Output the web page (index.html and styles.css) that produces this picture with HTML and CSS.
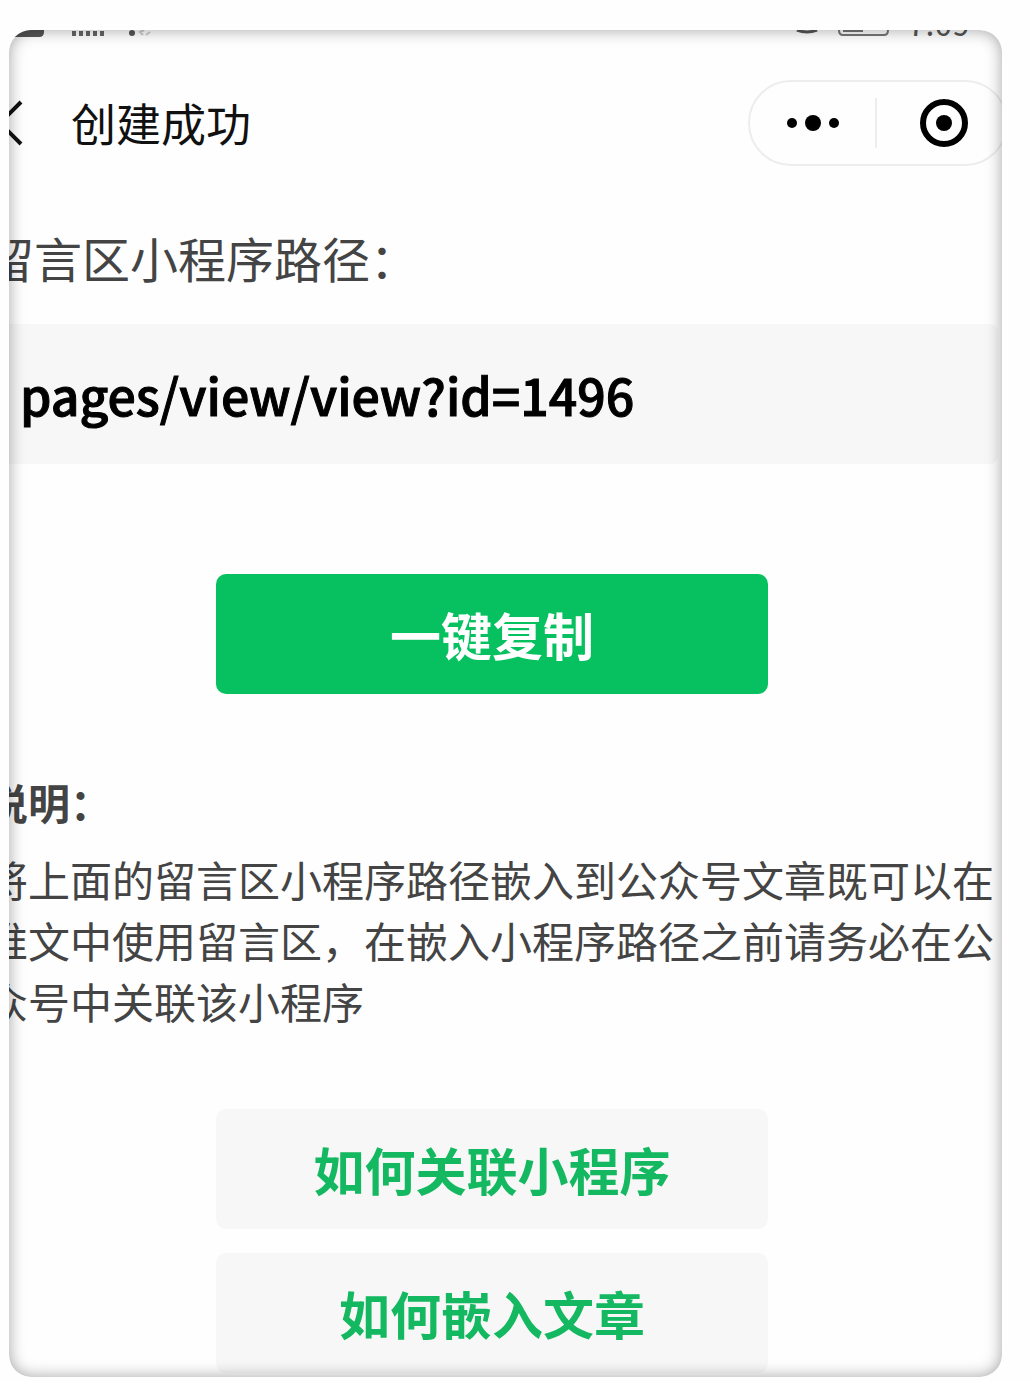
FILE: index.html
```html
<!DOCTYPE html>
<html lang="zh-CN">
<head>
<meta charset="utf-8">
<meta name="viewport" content="width=device-width, initial-scale=1">
<title>创建成功</title>
<link rel="stylesheet" href="styles.css">
</head>
<body>
<main class="card">
  <div class="status">
    <svg class="status-left" width="160" height="8" viewBox="0 0 160 8" aria-hidden="true">
      <path d="M0 0H35V2Q35 7 30 7H0Z" fill="#555"/>
      <path d="M65 1V6M72 1V6M79 1V6M86 1V6M93 1V6" stroke="#666" stroke-width="4"/>
      <circle cx="123" cy="3" r="3" fill="#555"/>
      <path d="M135 0l-4 2 3 3M137 5l4-3" stroke="#ccc" stroke-width="2" fill="none"/>
    </svg>
    <svg class="status-right" width="100" height="8" viewBox="0 0 100 8" aria-hidden="true">
      <path d="M3 0Q13 4 23 0" stroke="#555" stroke-width="3" fill="none"/>
      <path d="M45 0Q45 5 49 5H90Q94 5 94 0M49 1H69" stroke="#777" stroke-width="2" fill="none"/>
    </svg>
    <span class="time">7:09</span>
  </div>

  <header class="nav">
    <button class="back" type="button" aria-label="返回">
      <svg width="28" height="48" viewBox="0 0 28 48"><path d="M26 3L5 24L26 45" fill="none" stroke="#111" stroke-width="4"/></svg>
    </button>
    <h1 class="title">创建成功</h1>
    <div class="capsule">
      <button class="capsule-btn" type="button" aria-label="更多">
        <svg width="52" height="20" viewBox="0 0 52 20"><circle cx="5" cy="10" r="5"/><circle cx="26" cy="10" r="8"/><circle cx="47" cy="10" r="5"/></svg>
      </button>
      <button class="capsule-btn" type="button" aria-label="关闭">
        <svg width="48" height="48" viewBox="0 0 48 48"><circle cx="24" cy="24" r="21" fill="none" stroke="#000" stroke-width="6"/><circle cx="24" cy="24" r="8"/></svg>
      </button>
    </div>
  </header>

  <div class="content">
    <h2 class="label">留言区小程序路径：</h2>
    <p class="path">pages/view/view?id=1496</p>
    <button class="btn btn-primary" type="button">一键复制</button>
    <section class="notes">
      <h3 class="notes-title">说明：</h3>
      <p class="notes-text">将上面的留言区小程序路径嵌入到公众号文章既可以在推文中使用留言区，在嵌入小程序路径之前请务必在公众号中关联该小程序</p>
    </section>
    <div class="links">
      <button class="btn" type="button">如何关联小程序</button>
      <button class="btn" type="button">如何嵌入文章</button>
    </div>
  </div>
</main>
</body>
</html>
```
FILE: styles.css
```css
* {
  box-sizing: border-box;
}

body {
  margin: 0;
  padding: 30px 28px 4px 9px;
  background: #fefefe;
  color: #444;
  font-family: "Noto Sans CJK SC", sans-serif;
}

h1, h2, h3, p {
  margin: 0;
}

button {
  padding: 0;
  border: 0;
  background: none;
  font-family: inherit;
  cursor: pointer;
}

svg {
  display: block;
}

.card {
  position: relative;
  overflow: hidden;
  border-radius: 22px;
  background: #fefefe;
}

/* Inner edge shade, drawn above everything in the card */
.card::after {
  content: "";
  position: absolute;
  inset: 0;
  border-radius: inherit;
  box-shadow: inset 0 0 16px rgba(0, 0, 0, 0.36);
  pointer-events: none;
}

.status {
  display: flex;
  align-items: flex-end;
  height: 8px;
  padding-right: 32px;
}

.status-left {
  margin-right: auto;
}

.status-right {
  margin-right: 14px;
}

.time {
  color: #555;
  font-size: 32px;
  line-height: 32px;
}

.nav {
  display: flex;
  align-items: center;
  margin-top: 42px;
}

.back {
  margin-left: -14px;
}

.title {
  margin-left: 48px;
  color: #111;
  font-size: 45px;
  font-weight: 400;
  line-height: 64px;
}

.capsule {
  display: flex;
  width: 260px;
  height: 86px;
  margin-left: auto;
  margin-right: -6px;
  padding: 16px 0;
  border: 2px solid #ededed;
  border-radius: 43px;
}

.capsule-btn {
  display: flex;
  flex: 1;
  align-items: center;
  justify-content: center;
}

.capsule-btn + .capsule-btn {
  padding-left: 4px;
  border-left: 2px solid #ededed;
}

/* The content column is slightly wider than the card and runs off its left edge */
.content {
  display: flex;
  flex-direction: column;
  margin: 56px 4px 0 -23px;
}

.label {
  font-size: 48px;
  font-weight: 400;
  line-height: 70px;
}

.path {
  margin-top: 32px;
  padding: 30px 34px;
  border-radius: 8px;
  background: #f7f7f7;
  color: #000;
  font-size: 50px;
  font-weight: 500;
  line-height: 80px;
  -webkit-text-stroke: 1px #000;
}

.btn {
  align-self: center;
  width: 552px;
  height: 120px;
  border-radius: 10px;
  background: #f7f7f7;
  color: #14b860;
  font-size: 51px;
  font-weight: 700;
  line-height: 72px;
}

.btn-primary {
  margin-top: 110px;
  background: #07c160;
  color: #fff;
}

.notes {
  margin-top: 78px;
}

.notes-title {
  font-size: 42px;
  font-weight: 700;
  line-height: 60px;
}

.notes-text {
  margin-top: 16px;
  font-size: 42px;
  line-height: 61px;
}

.links {
  display: flex;
  flex-direction: column;
  gap: 24px;
  margin-top: 78px;
  padding-bottom: 4px;
}
```
